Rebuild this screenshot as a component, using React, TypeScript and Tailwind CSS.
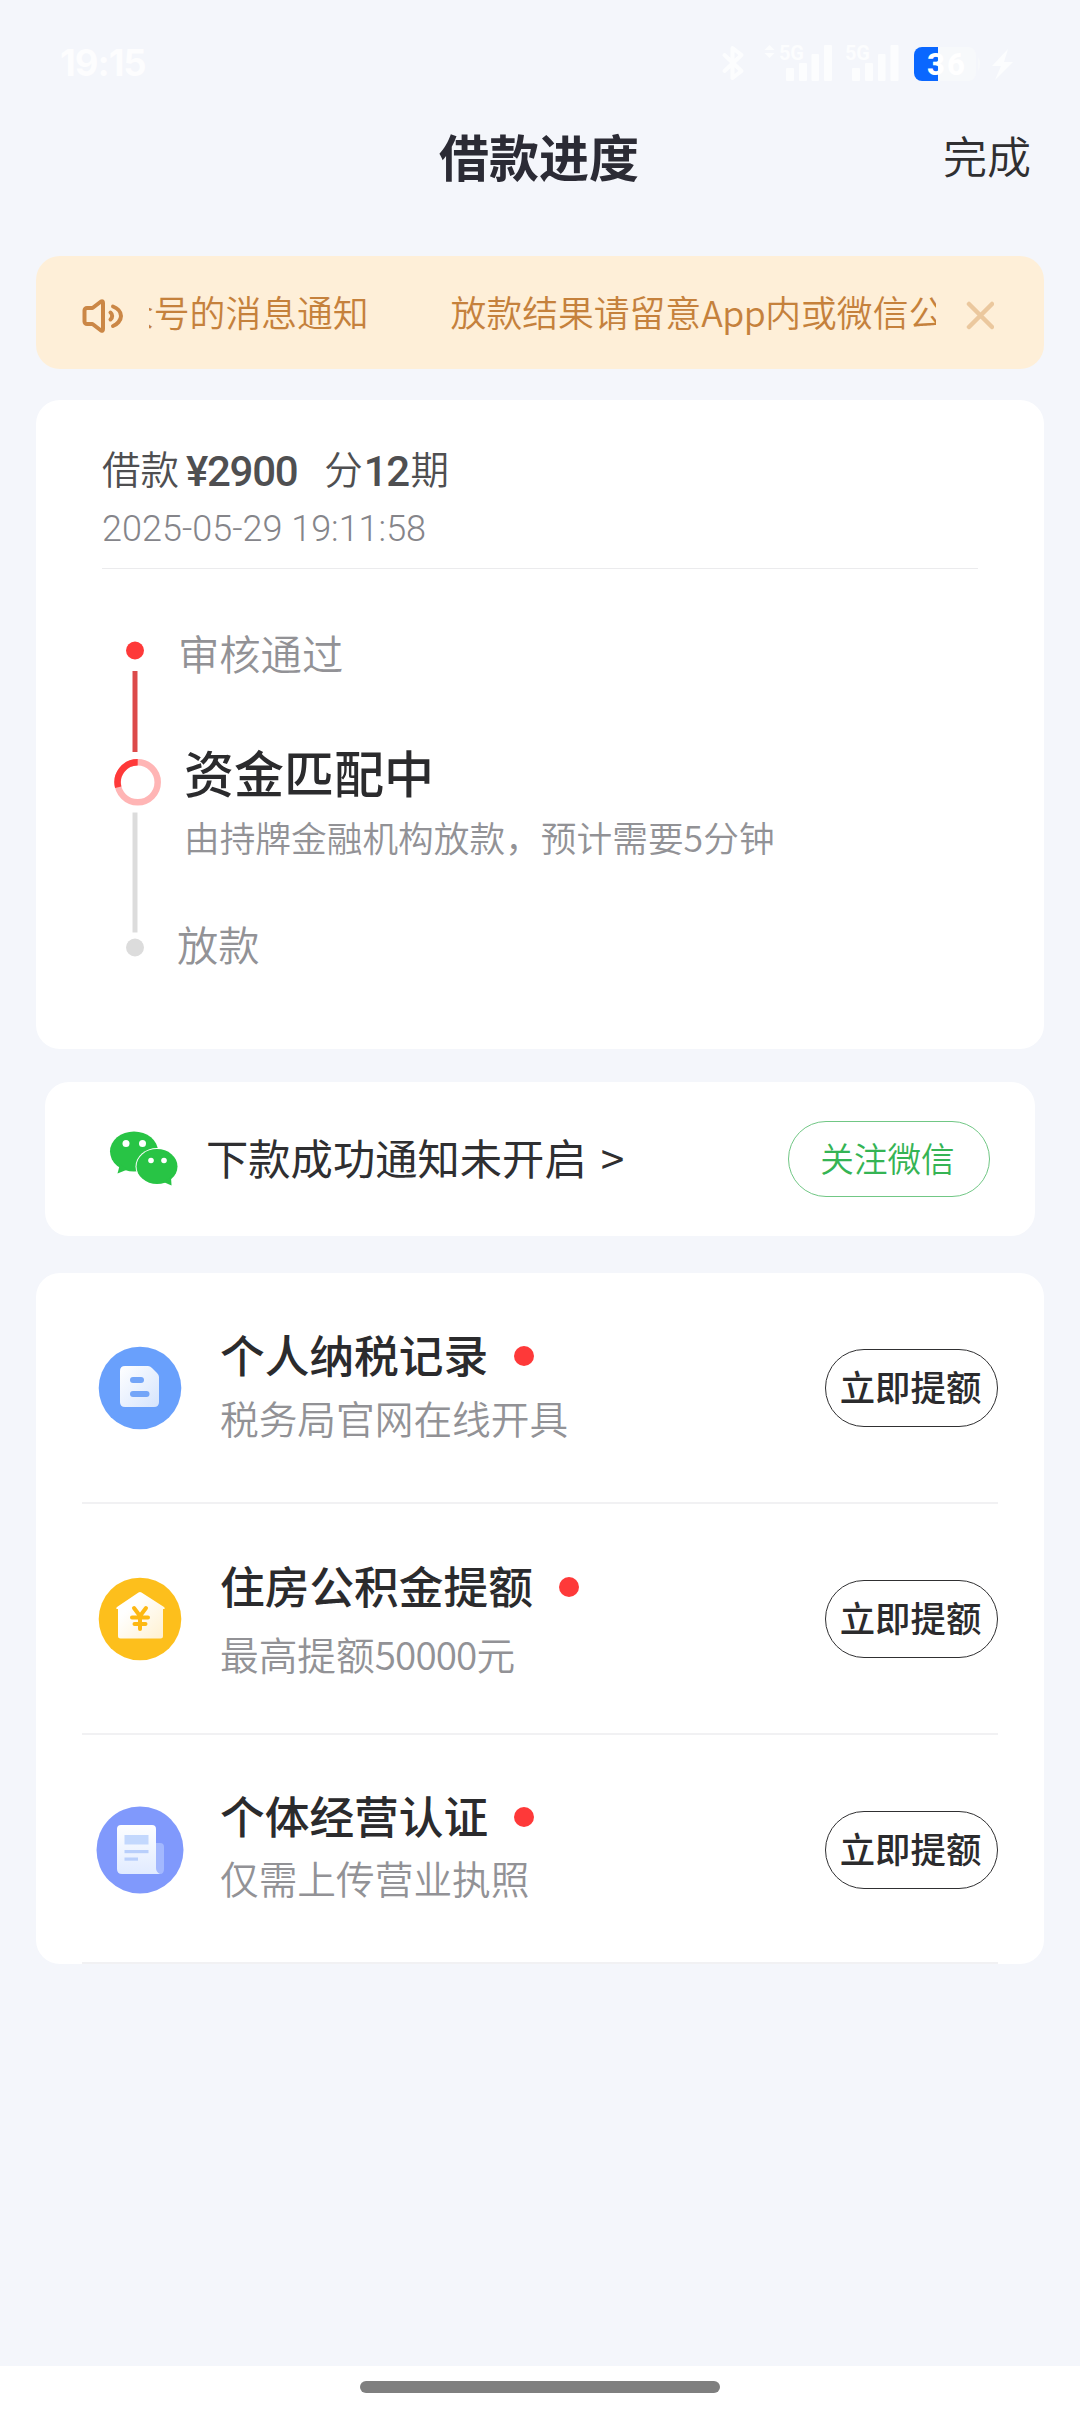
import React from 'react';

interface QuotaItem {
  title: string;
  description: React.ReactNode;
  icon: React.ReactNode;
  className: string;
  titleClass: string;
  descClass: string;
}

const StatusIcons = () => (
  <svg className="w-[320px] h-[60px]" viewBox="700 30 320 60" fill="none">
    <path d="M724.500 55l17 16-9 7V48l9 7-17 16" stroke="#fcfdfe" strokeWidth="4" strokeLinejoin="round" strokeLinecap="round" />
    <path d="M769.500 45l5 5h-10zM769.500 58l5-5h-10z" fill="#fcfdfe" />
    <g fill="#fcfdfe" fontFamily="Roboto, sans-serif" fontWeight="700" fontSize="20">
      <text x="779" y="60" textLength="25">5G</text>
      <text x="845" y="60" textLength="25">5G</text>
    </g>
    <g fill="#fcfdfe">
      <rect x="786" y="68" width="8" height="13" rx="1" />
      <rect x="799" y="63" width="8" height="18" rx="1" />
      <rect x="811.500" y="54" width="7.500" height="27" rx="1" />
      <rect x="824" y="45" width="8" height="36" rx="1" />
      <rect x="852" y="68" width="8" height="13" rx="1" />
      <rect x="865" y="63" width="8" height="18" rx="1" />
      <rect x="878" y="54" width="7.500" height="27" rx="1" />
      <rect x="890.500" y="45" width="8" height="36" rx="1" />
    </g>
    <rect x="914" y="47" width="62" height="34" rx="8" fill="#f7f9fb" />
    <path d="M938 47v34h-16a8 8 0 0 1-8-8V55a8 8 0 0 1 8-8z" fill="#0a67ff" />
    <path d="M978 57q4 7 0 14z" fill="#f7f9fb" />
    <text x="927" y="75" fill="#fff" fontFamily="Roboto, sans-serif" fontWeight="800" fontSize="31" textLength="38">36</text>
    <path d="M1008 49l-16 17h9l-6 14 18-18h-9z" fill="#fcfdfe" />
  </svg>
);

const SpeakerIcon = () => (
  <svg className="w-[44px] h-[38px] mt-[6px] ml-[1px] shrink-0" viewBox="0 0 44 38" fill="none" stroke="#cb8746" strokeWidth="4" strokeLinejoin="round" strokeLinecap="round">
    <path d="M6 11h5.500L20 4.500q2-1 2 1.500v26q0 2.500-2 1.500L11.500 27H6A2.500 2.500 0 0 1 3.500 24.500v-11A2.500 2.500 0 0 1 6 11z" />
    <path d="M29.500 15.500a4.500 4.500 0 0 1 0 7" />
    <path d="M32 9.500c4 1.500 8 5 8 9.500s-4 8.500-8 10" />
  </svg>
);

const WechatIcon = () => (
  <svg className="w-[70px] h-[56px] shrink-0" viewBox="0 0 70 56">
    <ellipse cx="25" cy="20.500" rx="24" ry="20" fill="#28c445" />
    <path d="M11 33l-2.500 9.500 10-4z" fill="#28c445" />
    <ellipse cx="48" cy="35.500" rx="21.500" ry="18.500" fill="#fff" />
    <ellipse cx="48" cy="35.500" rx="20.500" ry="17.500" fill="#28c445" />
    <path d="M62 46l0.500 8.500-8-3.500z" fill="#28c445" />
    <g fill="#fff">
      <ellipse cx="17" cy="12.500" rx="3.500" ry="3.500" />
      <ellipse cx="33.500" cy="12.500" rx="3.500" ry="3.500" />
      <ellipse cx="42" cy="29.500" rx="2.800" ry="2.800" />
      <ellipse cx="55" cy="29.500" rx="2.800" ry="2.800" />
    </g>
  </svg>
);

const TaxIcon = () => (
  <svg className="w-[88px] h-[88px]" viewBox="0 0 88 88">
    <defs>
      <linearGradient id="tax" x1="0" y1="0" x2="1" y2="1">
        <stop offset="0" stopColor="#fff" />
        <stop offset="1" stopColor="#d5e4fd" />
      </linearGradient>
    </defs>
    <circle cx="44" cy="44" r="41.300" fill="#69a0fc" />
    <path d="M29 22h23q2 0 4 2l5 5q2 2 2 4v25q0 5-5 5H29q-5 0-5-5V27q0-5 5-5z" fill="url(#tax)" />
    <rect x="34" y="33" width="14" height="6" rx="3" fill="#73a5f8" />
    <rect x="34" y="47" width="19.500" height="6" rx="3" fill="#73a5f8" />
  </svg>
);

const HouseIcon = () => (
  <svg className="w-[88px] h-[88px]" viewBox="0 0 88 88">
    <defs>
      <linearGradient id="house" x1="0.300" y1="0.300" x2="1" y2="1">
        <stop offset="0" stopColor="#fff" />
        <stop offset="1" stopColor="#fff0cf" />
      </linearGradient>
    </defs>
    <circle cx="44" cy="44" r="41.300" fill="#fdbf1c" />
    <path d="M42.500 17.500q1.500-1 3 0L68 32q2 2-1 2v27q0 2.500-2.500 2.500h-40Q22 63.500 22 61V34q-3 0-1-2z" fill="url(#house)" />
    <path d="M38 33l6 8 6-8M44 41v13M36 42.500h16M38.500 49h11" fill="none" stroke="#fdb813" strokeWidth="4" strokeLinecap="round" strokeLinejoin="round" />
  </svg>
);

const LicenseIcon = () => (
  <svg className="w-[88px] h-[88px]" viewBox="0 0 88 88">
    <defs>
      <linearGradient id="license" x1="0" y1="0" x2="0" y2="1">
        <stop offset="0" stopColor="#fdfeff" />
        <stop offset="1" stopColor="#e1ebff" />
      </linearGradient>
    </defs>
    <circle cx="44" cy="44" r="43.500" fill="#8099fc" />
    <path d="M60 37h4q4 0 4 4v22q0 5-4 5h-8z" fill="#a3b8fe" />
    <path d="M25 19h31q4 0 4 4v39q0 4 4 6H26q-5 0-5-5V23q0-4 4-4z" fill="url(#license)" />
    <rect x="28.500" y="29" width="24" height="9.500" fill="#c3d8fd" />
    <rect x="28.500" y="44" width="24" height="3.200" fill="#b9cffb" />
    <rect x="28.500" y="51.500" width="13.500" height="3.200" fill="#b9cffb" />
  </svg>
);

const items: QuotaItem[] = [
  {
    title: '个人纳税记录',
    description: '税务局官网在线开具',
    icon: <TaxIcon />,
    className: 'h-[231px]',
    titleClass: 'mt-[49px]',
    descClass: 'mt-[17px]',
  },
  {
    title: '住房公积金提额',
    description: <>最高提额<span className="tracking-[-0.9px]">50000</span>元</>,
    icon: <HouseIcon />,
    className: 'h-[231px]',
    titleClass: 'mt-[49px]',
    descClass: 'mt-[22px]',
  },
  {
    title: '个体经营认证',
    description: '仅需上传营业执照',
    icon: <LicenseIcon />,
    className: 'h-[229px]',
    titleClass: 'mt-[48px]',
    descClass: 'mt-[16px]',
  },
];

const QuotaRow: React.FC<{ item: QuotaItem }> = ({ item }) => (
  <div className={`flex mx-[46px] border-b-2 border-[#f1f1f3] ${item.className}`}>
    <div className="pt-[71px] pl-[14px] w-[138px]">{item.icon}</div>
    <div className="flex-1">
      <div className={`flex items-center h-[64px] -my-[10px] ${item.titleClass}`}>
        <h3 className="text-[44.7px] leading-[64px] font-medium text-[#2b2b2d] whitespace-nowrap">{item.title}</h3>
        <span className="w-5 h-5 mt-[4px] ml-[26px] rounded-full bg-[#fe3939]" />
      </div>
      <p className={`text-[38.7px] leading-[48px] text-[#929296] font-[350] whitespace-nowrap ${item.descClass}`}>{item.description}</p>
    </div>
    <button className="w-[173px] h-[78px] mt-[76px] pb-[4px] pr-[2px] border-[1.5px] border-[#303032] rounded-full text-[35.4px] leading-none font-medium text-[#2b2b2d] whitespace-nowrap">
      立即提额
    </button>
  </div>
);

const App: React.FC = () => {
  return (
    <div className="flex flex-col w-[1080px] h-[2414px] bg-[#f4f6fb] overflow-hidden font-['Noto_Sans_CJK_SC',sans-serif]">
      <div className="flex justify-between h-[90px] pt-[30px] pl-[60px] pr-[60px]">
        <span className="font-['Inter',sans-serif] text-[36.5px] leading-[66px] font-bold tracking-[-1px] text-[#fdfdfe]">19:15</span>
        <StatusIcons />
      </div>

      <header className="grid grid-cols-3 items-center h-[130px] px-[49px]">
        <span />
        <h1 className="-ml-[2px] text-center text-[50px] leading-none font-bold text-[#2b2b35]">借款进度</h1>
        <span className="text-right text-[44px] leading-none font-[350] text-[#2f2f31]">完成</span>
      </header>

      <div className="flex items-center mt-[36px] mx-9 h-[113px] pl-[44px] pr-[49px] rounded-[24px] bg-[#feefd8]">
        <SpeakerIcon />
        <div className="flex gap-[82px] w-[787px] ml-[24px] mb-[3px] overflow-hidden whitespace-nowrap text-[35.8px] leading-[50px] font-[350] text-[#c5813c]">
          <span className="-ml-[31px]">众号的消息通知</span>
          <span>放款结果请留意<span className="tracking-[-0.5px]">App</span>内或微信公</span>
        </div>
        <svg className="w-[28px] h-[30px] mt-[4px] ml-[30px] shrink-0" viewBox="0 0 28 30" stroke="#ebc89e" strokeWidth="4.500" strokeLinecap="round">
          <path d="M3 4l23 23M26 4L3 27" />
        </svg>
      </div>

      <section className="mt-[31px] mx-9 h-[649px] px-[66px] pt-[37px] rounded-[24px] bg-white">
        <div className="flex items-center h-[62px] text-[38.5px] font-[350] text-[#4f4f51] whitespace-nowrap">
          <span>借款</span>
          <span className="font-['Roboto',sans-serif] font-medium text-[42px] tracking-[-1.3px] mt-[6px] ml-[7px]">¥2900</span>
          <span className="ml-[27px]">分</span>
          <span className="font-['Roboto',sans-serif] font-medium text-[42px] tracking-[-1.5px] mt-[6px] ml-[1px]">12</span>
          <span className="ml-[2px]">期</span>
        </div>
        <div className="h-[70px] pt-[6px] border-b-[1.5px] border-[#ebebed] font-['Roboto',sans-serif] font-light text-[36px] leading-[48px] text-[#85858a]">
          2025-05-29 19:11:58
        </div>
        <div className="flex">
          <svg className="w-[78px] h-[420px] shrink-0" viewBox="102 569 78 420" fill="none">
            <circle cx="135" cy="650.500" r="9" fill="#fe3939" />
            <path d="M135 671v81" stroke="#dc4a4a" strokeWidth="5" />
            <circle cx="137.700" cy="782.300" r="20" stroke="#ffb5b5" strokeWidth="6.500" />
            <path d="M137.700 762.300a20 20 0 0 0-19.500 25" stroke="#fe3939" strokeWidth="6.500" />
            <path d="M135 812.500v120" stroke="#dcdcdc" strokeWidth="5" />
            <circle cx="135" cy="947.500" r="9" fill="#dcdcdc" />
          </svg>
          <div className="whitespace-nowrap text-[#929296]">
            <p className="mt-[53px] -ml-[2px] text-[41.3px] leading-[60px] font-[350]">审核通过</p>
            <p className="mt-[54px] ml-[4px] text-[50px] leading-[70px] font-medium text-[#2b2b2d]">资金匹配中</p>
            <p className="mt-[5px] ml-[4px] text-[35.7px] leading-[52px] font-[350]">由持牌金融机构放款，预计需要5分钟</p>
            <p className="mt-[50px] -ml-[3px] text-[41.3px] leading-[60px] font-[350]">放款</p>
          </div>
        </div>
      </section>

      <section className="flex items-center mt-[33px] mx-[45px] h-[154px] pl-[64px] pr-[45px] rounded-[24px] bg-white">
        <WechatIcon />
        <span className="mb-[4px] ml-[27px] text-[42.3px] leading-none text-[#2f2f31] whitespace-nowrap">
          下款成功通知未开启<span className="ml-[14px]">&gt;</span>
        </span>
        <button className="w-[202px] h-[76px] ml-auto pb-[2px] pr-[3px] border-[1.5px] border-[#71c785] rounded-full text-[33.6px] leading-none font-[350] text-[#35b454] whitespace-nowrap">
          关注微信
        </button>
      </section>

      <section className="mt-[37px] mx-9 h-[691px] rounded-[24px] bg-white">
        {items.map(item => (
          <QuotaRow key={item.title} item={item} />
        ))}
      </section>

      <footer className="flex justify-center mt-auto h-[48px] pt-[15px] bg-white">
        <div className="w-[360px] h-3 rounded-full bg-[#7f7f7f]" />
      </footer>
    </div>
  );
};

export default App;
